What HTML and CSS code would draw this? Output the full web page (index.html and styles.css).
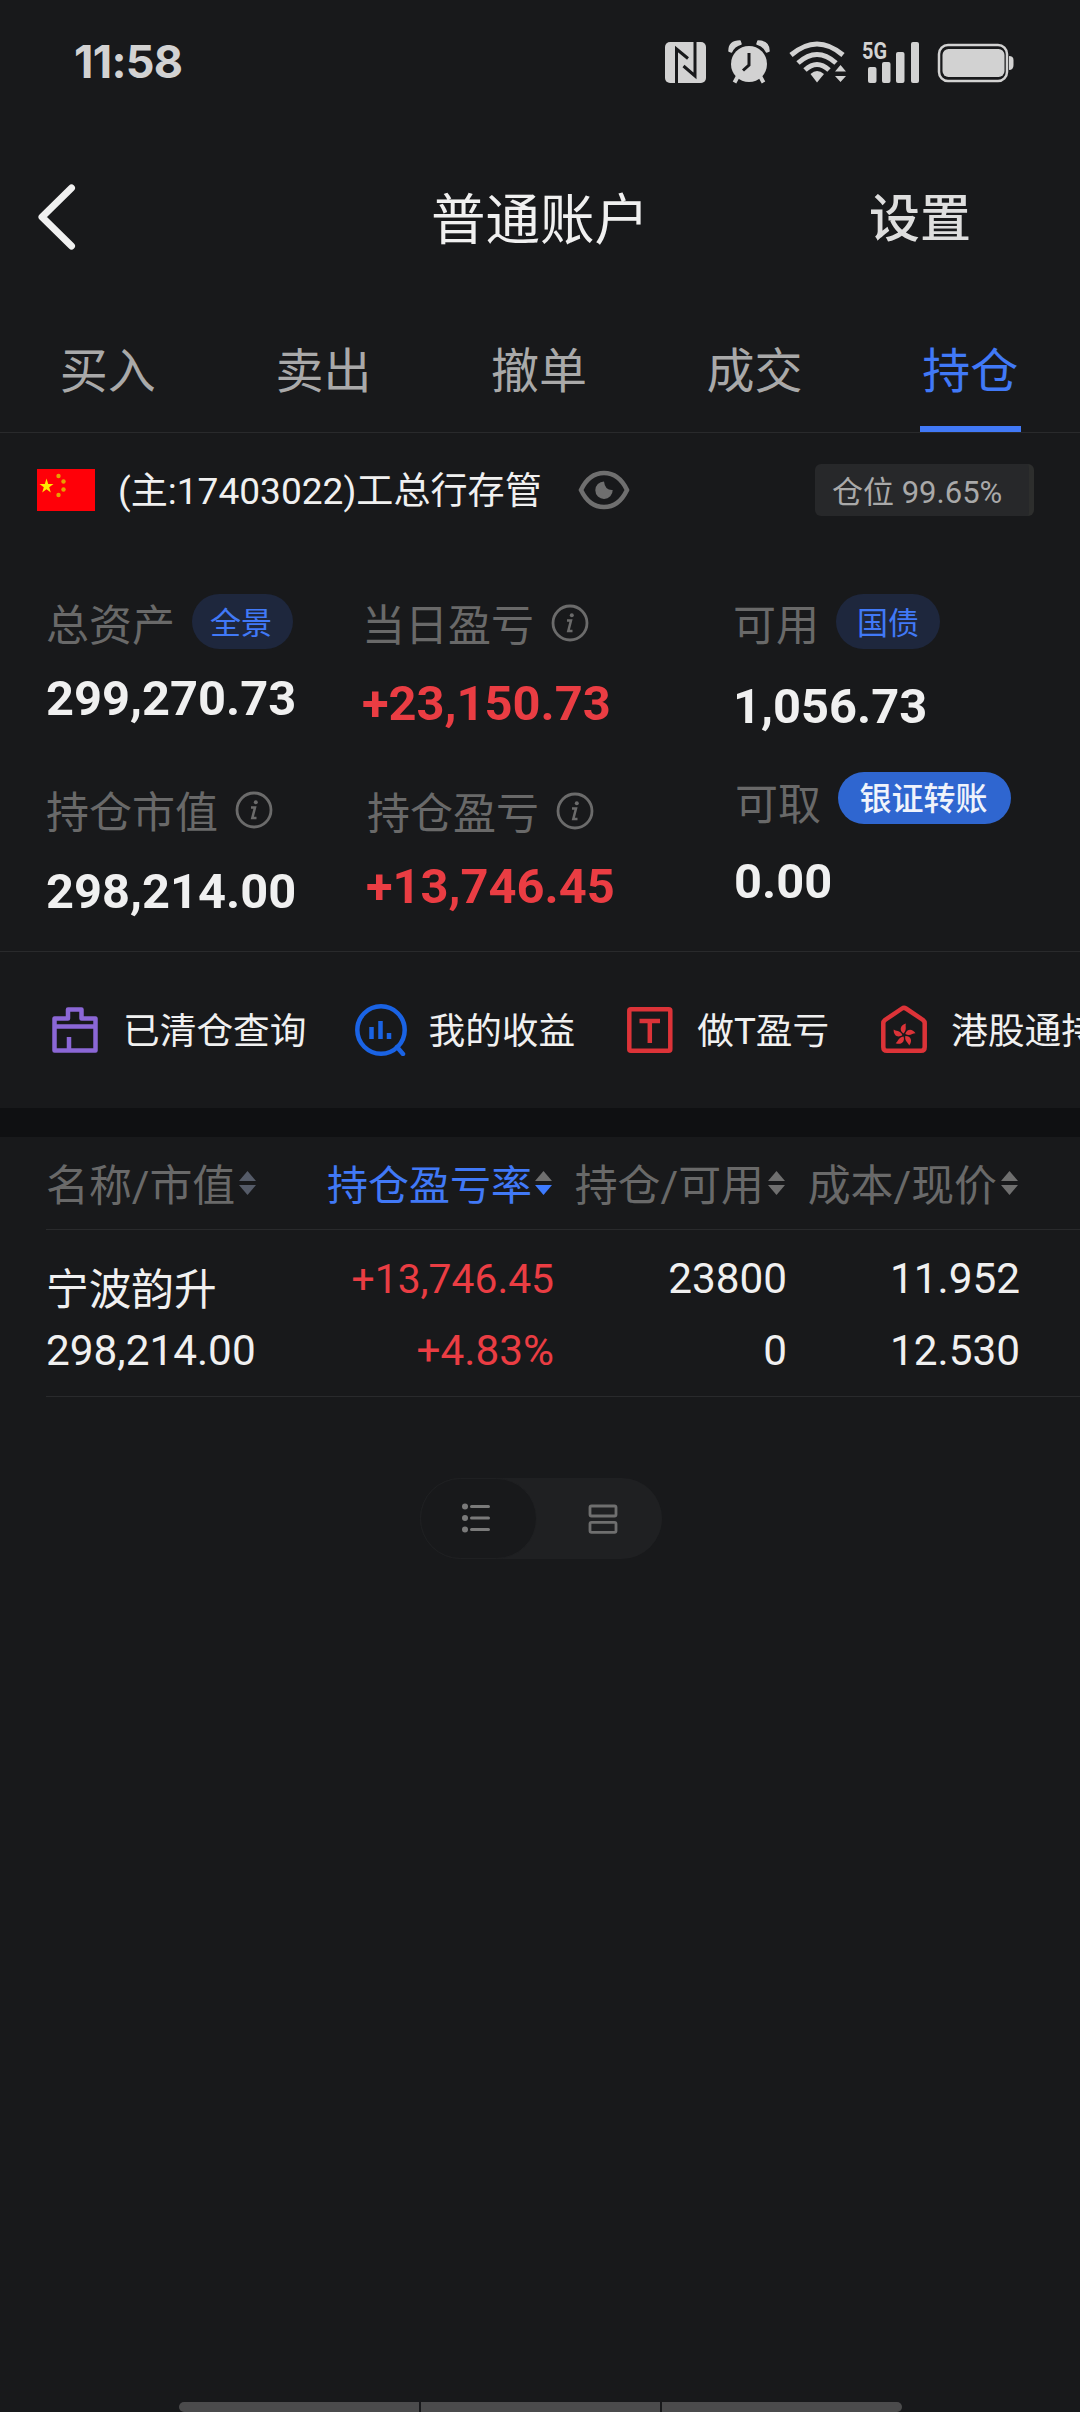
FILE: index.html
```html
<!DOCTYPE html>
<html lang="zh-CN">
<head>
<meta charset="utf-8">
<title>普通账户</title>
<link rel="stylesheet" href="styles.css">
</head>
<body>
<div class="screen">
  <div class="status">
    <span class="clock">11:58</span>
    <svg class="status-icons" width="352" height="48" viewBox="0 0 352 48" fill="#d2d2d2">
      <rect x="1" y="4" width="41" height="41" rx="5"/>
      <path d="M12.500 46V11L24 20.500M31 3V38L19.500 28" fill="none" stroke="#18191b" stroke-width="3"/>
      <circle cx="85" cy="26" r="18"/>
      <path d="M65 13Q65 3 76 3L77 6Q70 8 67.500 14Z M105 13Q105 3 94 3L93 6Q100 8 102.500 14Z" stroke="#d2d2d2" stroke-width="1.500" stroke-linejoin="round"/>
      <path d="M74 38L70.500 44.500M96 38L99.500 44.500" stroke="#d2d2d2" stroke-width="4"/>
      <path d="M85 15V27L79 32.500" fill="none" stroke="#18191b" stroke-width="3"/>
      <g fill="none" stroke="#d2d2d2" stroke-width="5">
        <path d="M127 17Q153 -5 179 17"/>
        <path d="M134 25Q153 8 172 25"/>
        <path d="M141 32Q153 21 165 32"/>
      </g>
      <path d="M146.500 36Q153 30 160 36L153 44.500Z"/>
      <path d="M171 33.500H182L176.500 27ZM171 38H182L176.500 44Z"/>
      <text class="net" x="198" y="20.500" textLength="25" lengthAdjust="spacingAndGlyphs">5G</text>
      <rect x="204" y="29" width="8.500" height="16" rx="2"/>
      <rect x="218" y="24" width="8.500" height="21" rx="2"/>
      <rect x="232" y="14" width="8.500" height="31" rx="2"/>
      <rect x="247" y="4" width="8" height="41" rx="2"/>
      <rect x="275" y="7" width="68" height="36" rx="9" fill="none" stroke="#d2d2d2" stroke-width="2.500"/>
      <rect x="278.500" y="11" width="62" height="28" rx="6"/>
      <path d="M345 18Q349.500 18 349.500 22V27Q349.500 32 345 32Z"/>
    </svg>
  </div>

  <header class="nav">
    <svg class="back" width="40" height="68" viewBox="0 0 40 68"><path d="M34.500 5L5 34L34.500 63" fill="none" stroke="#f0f0f0" stroke-width="7" stroke-linecap="round" stroke-linejoin="round"/></svg>
    <h1 class="title">普通账户</h1>
    <span class="settings">设置</span>
  </header>

  <nav class="tabs">
    <span class="tab">买入</span>
    <span class="tab">卖出</span>
    <span class="tab">撤单</span>
    <span class="tab">成交</span>
    <span class="tab active">持仓</span>
  </nav>

  <div class="account">
    <svg class="flag" width="58" height="42" viewBox="0 0 58 42">
      <rect width="58" height="42" fill="#ff0008"/>
      <path d="M9.500 9.500L11.200 14.900H16.500L12.200 18.200L13.800 23.500L9.500 20.300L5.200 23.500L6.800 18.200L2.500 14.900H7.800Z" fill="#ffea00"/>
      <g fill="#e8a000"><circle cx="21.500" cy="7" r="2.200"/><circle cx="26.500" cy="12.500" r="2.200"/><circle cx="26.500" cy="20.500" r="2.200"/><circle cx="21.500" cy="26" r="2.200"/></g>
    </svg>
    <span class="account-name">(主:17403022)工总行存管</span>
    <svg class="eye" width="52" height="40" viewBox="0 0 52 40">
      <path d="M3 20Q11 3 26 3T49 20Q41 37 26 37T3 20Z" fill="none" stroke="#6f6f6f" stroke-width="4.500"/>
      <path d="M26 11.500A8.700 8.700 0 1 0 34.700 20Q27 20.500 26 11.500Z" fill="#6f6f6f"/>
    </svg>
    <span class="ratio">仓位 99.65%</span>
  </div>

  <section class="summary">
    <div class="col col-a">
      <div class="label">总资产<span class="pill pill-a">全景</span></div>
      <div class="value">299,270.73</div>
      <div class="label">持仓市值<svg class="info" width="38" height="38" viewBox="0 0 38 38"><use href="#info"/></svg></div>
      <div class="value">298,214.00</div>
    </div>
    <div class="col col-b">
      <div class="label">当日盈亏<svg class="info" width="38" height="38" viewBox="0 0 38 38">
        <g id="info"><circle cx="19" cy="19" r="17" fill="none" stroke="#6b6b6b" stroke-width="2.800"/><circle cx="20.800" cy="11.300" r="2" fill="#6b6b6b"/><path d="M16 16.500H20L17.300 27H21.500" fill="none" stroke="#6b6b6b" stroke-width="2.500"/></g></svg></div>
      <div class="value up">+23,150.73</div>
      <div class="label">持仓盈亏<svg class="info" width="38" height="38" viewBox="0 0 38 38"><use href="#info"/></svg></div>
      <div class="value up">+13,746.45</div>
    </div>
    <div class="col col-c">
      <div class="label">可用<span class="pill">国债</span></div>
      <div class="value">1,056.73</div>
      <div class="label">可取<span class="transfer">银证转账</span></div>
      <div class="value">0.00</div>
    </div>
  </section>

  <section class="quick">
    <div class="item">
      <svg width="52" height="52" viewBox="0 0 52 52" fill="none" stroke="#8b67d6" stroke-width="4.500" stroke-linejoin="round"><path d="M4.500 14.500H18V5.500H31.500V14.500H45.500V46.500H4.500ZM4.500 22.500H45.500M19 33V46"/></svg>
      <span>已清仓查询</span>
    </div>
    <div class="item">
      <svg width="52" height="52" viewBox="0 0 52 52" fill="none" stroke="#1a63e4" stroke-width="4.500"><circle cx="26" cy="26" r="23.700"/><path d="M42 43L48 50" stroke-linecap="round"/><path d="M16.500 23V35M25.500 17V35M34 29V35"/></svg>
      <span>我的收益</span>
    </div>
    <div class="item">
      <svg width="52" height="52" viewBox="0 0 52 52" fill="none" stroke="#dc3338" stroke-width="4.500"><rect x="5.300" y="5.300" width="41" height="41.500" rx="1.500"/><path d="M15.500 17H36M25.800 17V39"/></svg>
      <span>做T盈亏</span>
    </div>
    <div class="item">
      <svg width="52" height="52" viewBox="0 0 52 52" fill="none" stroke="#dc3338" stroke-width="4.500"><path d="M5.300 19Q5.300 17.500 7 16L24 4.500Q26 3.200 28 4.500L45 16Q46.700 17.500 46.700 19V43Q46.700 46.800 43 46.800H9Q5.300 46.800 5.300 43Z"/>
        <g fill="#dc3338" stroke="none"><path id="petal" d="M25.500 29.500C21 26.500 22 21 28 19.500C26.800 22 29.500 25.500 25.500 29.500Z"/><use href="#petal" transform="rotate(72 26 31)"/><use href="#petal" transform="rotate(144 26 31)"/><use href="#petal" transform="rotate(216 26 31)"/><use href="#petal" transform="rotate(288 26 31)"/></g></svg>
      <span>港股通持仓</span>
    </div>
  </section>

  <section class="holdings">
    <div class="grid head">
      <div class="th">名称/市值<svg class="sort slate" width="17" height="24" viewBox="0 0 17 24"><path d="M0 10L8.500 0L17 10Z"/><path d="M0 14L8.500 24L17 14Z"/></svg></div>
      <div class="th sorted">持仓盈亏率<svg class="sort desc" width="17" height="24" viewBox="0 0 17 24"><path d="M0 10L8.500 0L17 10Z"/><path d="M0 14L8.500 24L17 14Z"/></svg></div>
      <div class="th">持仓/可用<svg class="sort" width="17" height="24" viewBox="0 0 17 24"><path d="M0 10L8.500 0L17 10Z"/><path d="M0 14L8.500 24L17 14Z"/></svg></div>
      <div class="th">成本/现价<svg class="sort" width="17" height="24" viewBox="0 0 17 24"><path d="M0 10L8.500 0L17 10Z"/><path d="M0 14L8.500 24L17 14Z"/></svg></div>
    </div>
    <div class="grid row">
      <div class="td"><span class="stock">宁波韵升</span><span>298,214.00</span></div>
      <div class="td gain"><span>+13,746.45</span><span class="rate">+4.83%</span></div>
      <div class="td"><span>23800</span><span>0</span></div>
      <div class="td"><span>11.952</span><span>12.530</span></div>
    </div>
  </section>

  <div class="toggle">
    <div class="mode on"><svg width="28" height="30" viewBox="0 0 28 30" fill="#7a7a7a"><circle cx="3" cy="3.500" r="3"/><circle cx="3" cy="15" r="3"/><circle cx="3" cy="26.500" r="3"/><path d="M9.500 3.500H26.500M9.500 15H26.500M9.500 26.500H26.500" stroke="#7a7a7a" stroke-width="3" stroke-linecap="round"/></svg></div>
    <div class="mode"><svg width="30" height="30" viewBox="0 0 30 30" fill="none" stroke="#6f6f6f" stroke-width="2.800"><rect x="2" y="2" width="26" height="10" rx="1.500"/><rect x="2" y="18.300" width="26" height="10" rx="1.500"/></svg></div>
  </div>

  <div class="dock"><i></i><i></i><i></i></div>
</div>
</body>
</html>
```
FILE: styles.css
```css
* { box-sizing: border-box; }
body {
  margin: 0;
  background: #18191b;
  color: #f0f0f0;
  font-family: Roboto, "Noto Sans CJK SC", sans-serif;
}
svg { display: block; flex: none; }
.screen {
  width: 1080px;
  height: 2412px;
  display: flex;
  flex-direction: column;
  overflow: hidden;
  white-space: nowrap;
}

.status {
  height: 125px;
  padding: 0 64px 0 74px;
  display: flex;
  align-items: center;
  justify-content: space-between;
}
.clock {
  font: 650 45px/46px Inter, sans-serif;
  letter-spacing: -0.7px;
  color: #d2d2d2;
  margin-bottom: 2px;
}
.status-icons { margin-bottom: 1px; }
.net { font: 700 24px Roboto, sans-serif; }

.nav {
  height: 190px;
  padding: 0 109px 0 37px;
  display: grid;
  grid-template-columns: 1fr auto 1fr;
  align-items: center;
}
.back { margin-top: -6px; }
.title {
  margin: 0;
  padding-left: 72px;
  font-size: 54.5px;
  font-weight: 400;
  line-height: 190px;
}
.settings {
  justify-self: end;
  font-size: 51px;
  font-weight: 500;
  line-height: 190px;
  color: #dedede;
}

.tabs {
  height: 118px;
  padding-right: 2px;
  display: grid;
  grid-template-columns: repeat(5, 1fr);
  justify-items: center;
  border-bottom: 1px solid #292a2c;
}
.tab {
  width: 101px;
  text-align: center;
  font-size: 48px;
  line-height: 113px;
  color: #a9a9a9;
}
.active { color: #4179f7; border-bottom: 6px solid #4179f7; height: 117px; }

.account {
  height: 114px;
  padding: 0 46px 0 37px;
  display: flex;
  align-items: center;
}
.account-name { font-size: 37.1px; line-height: 44px; margin-left: 23px; padding-top: 4px; }
.eye { margin-left: 36px; }
.ratio {
  margin-left: auto;
  width: 219px;
  height: 52px;
  padding-left: 17px;
  border-radius: 6px;
  background: #27282a;
  border-right: 5px solid #2d2e2d;
  color: #a9a9a9;
  font-size: 31px;
  line-height: 58px;
}

.summary {
  height: 405px;
  padding: 47px 0 0 46px;
  display: grid;
  grid-template-columns: 316px 371px 1fr;
  border-bottom: 1px solid #292a2c;
}
.label {
  height: 56px;
  display: flex;
  align-items: flex-start;
  font-size: 43px;
  line-height: 64px;
  color: #696969;
}
.value {
  height: 56px;
  font-size: 48.8px;
  font-weight: 700;
  line-height: 58px;
}
.up { color: #ea3d43; }
.col-a .value { margin: 20px 0 55px; }
.col-a .value:last-child { margin-top: 26px; }
.col-b .value { margin: 26px 0 50px; line-height: 56px; }
.col-b .value:last-child { margin: 20px 0 0 4px; line-height: 58px; }
.col-b .label:nth-child(3) { padding-left: 5px; }
.col-c .value { margin: 28px 0 39px; }
.col-c .value:last-child { margin: 24px 0 0 1px; }
.col-c .label:nth-child(3) { padding-left: 2px; }
.info { margin: 10px 0 0 17px; }
.pill {
  height: 55px;
  padding: 0 21px;
  margin-left: 17px;
  border-radius: 28px;
  background: #1e273d;
  color: #4179f7;
  font-size: 31px;
  line-height: 59px;
}
.pill-a { padding: 0 21px 0 18px; }
.transfer {
  height: 52px;
  padding: 0 23.5px 0 21.5px;
  margin: -1px 0 0 17px;
  border-radius: 26px;
  background: #2f66d0;
  color: #f0f3fb;
  font-size: 32px;
  font-weight: 500;
  line-height: 55px;
}

.quick {
  height: 156px;
  padding-left: 50px;
  display: flex;
  align-items: center;
  gap: 49px;
  font-size: 36.7px;
  line-height: 44px;
}
.item { display: flex; align-items: center; gap: 21px; flex: none; }
.item span { padding-top: 4px; }

.holdings { border-top: 29px solid #0f1012; }
.grid {
  margin-left: 46px;
  display: grid;
  grid-template-columns: 260px 248px 233px 293px;
  border-bottom: 1px solid #292a2c;
}
.head { height: 93px; font-size: 42.9px; line-height: 98px; color: #696969; }
.th { display: flex; align-items: flex-start; justify-content: flex-end; }
.th:first-child { justify-content: flex-start; }
.th:last-child { padding-right: 60px; }
.sort { margin: 34px 2px 0 4px; fill: #6f6f6f; }
.slate { fill: #555b68; }
.sorted { font-size: 41px; color: #4179f7; }
.sorted .sort { margin-left: 3px; }
.desc path:last-child { fill: #3d7bff; }
.row { height: 167px; padding-top: 12px; font-size: 42.3px; }
.td { display: flex; flex-direction: column; text-align: right; }
.td span { height: 72px; line-height: 73px; }
.td:first-child { text-align: left; }
.td:last-child { padding-right: 60px; }
.td .stock { font-size: 42.7px; line-height: 96px; }
.gain { font-size: 40.8px; color: #ea3d43; }
.gain span:first-child { line-height: 74px; }
.td .rate { font-size: 42.3px; }

.toggle {
  align-self: flex-start;
  margin: 81px 0 0 420px;
  width: 242px;
  height: 81px;
  border-radius: 41px;
  background: #1f2022;
  display: flex;
}
.mode { flex: 1; display: flex; align-items: center; padding-left: 51px; }
.mode.on { flex: 0 0 117px; padding-left: 41px; border: 1px solid #1f2022; border-radius: 41px; background: #18191b; padding-bottom: 1px; }

.dock { margin: auto auto 0 179px; width: 723px; height: 10px; display: flex; gap: 2px; }
.dock i { flex: 1; background: #4b4b4c; }
.dock i:first-child { border-radius: 6px 0 0 6px; }
.dock i:last-child { border-radius: 0 6px 6px 0; }
```
